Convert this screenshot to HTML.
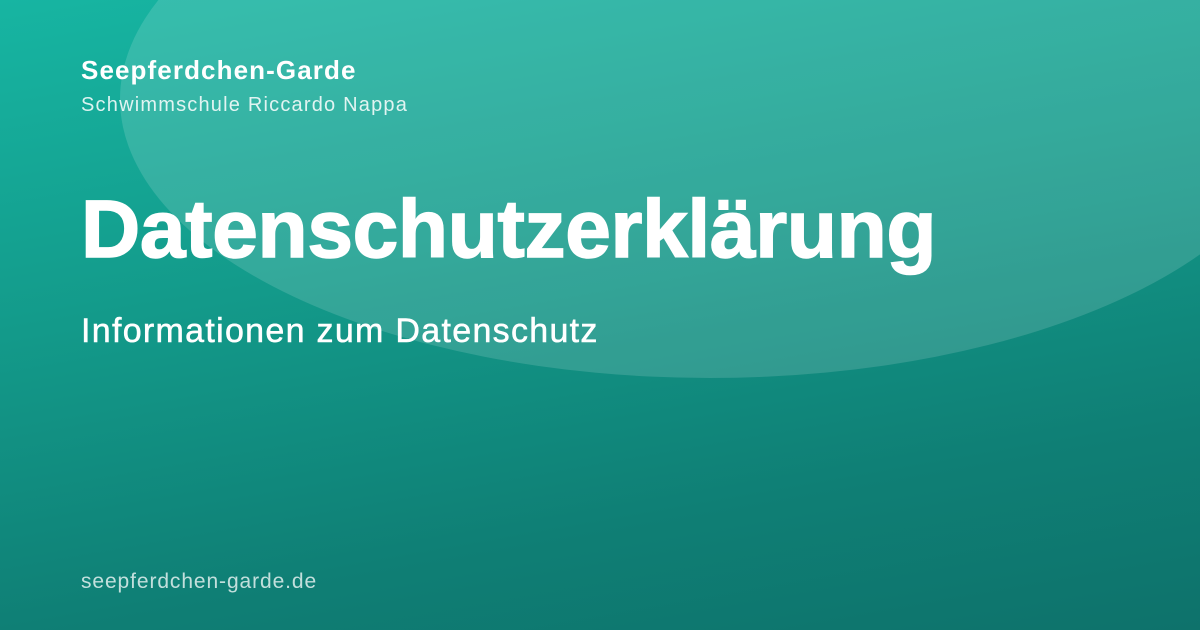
<!DOCTYPE html>
<html><head><meta charset="utf-8"><style>
html,body{margin:0;padding:0}
body{width:1200px;height:630px;overflow:hidden;position:relative;font-family:"Liberation Sans",sans-serif;
background:linear-gradient(170deg,#17b5a2 0%,#139a8a 40%,#0f7f75 75%,#0e726b 100%);}
.ell{position:absolute;left:120px;top:-180px;width:1180px;height:558px;border-radius:50%;background:rgba(255,255,255,0.14)}
.t{position:absolute;left:81px;color:#fff;white-space:nowrap}
</style></head><body>
<div class="ell"></div>
<div class="t" style="top:55px;font-size:26px;font-weight:bold;letter-spacing:1.1px">Seepferdchen-Garde</div>
<div class="t" style="top:94px;font-size:20px;letter-spacing:1.2px;color:rgba(255,255,255,0.85)">Schwimmschule Riccardo Nappa</div>
<div class="t" style="top:183px;font-size:82px;font-weight:bold;letter-spacing:-0.3px;-webkit-text-stroke:1.5px #fff">Datenschutzerklärung</div>
<div class="t" style="top:312px;font-size:34px;letter-spacing:1.3px;-webkit-text-stroke:0.5px #fff">Informationen zum Datenschutz</div>
<div class="t" style="top:570px;font-size:21px;letter-spacing:0.9px;color:rgba(255,255,255,0.75)">seepferdchen-garde.de</div>
</body></html>
